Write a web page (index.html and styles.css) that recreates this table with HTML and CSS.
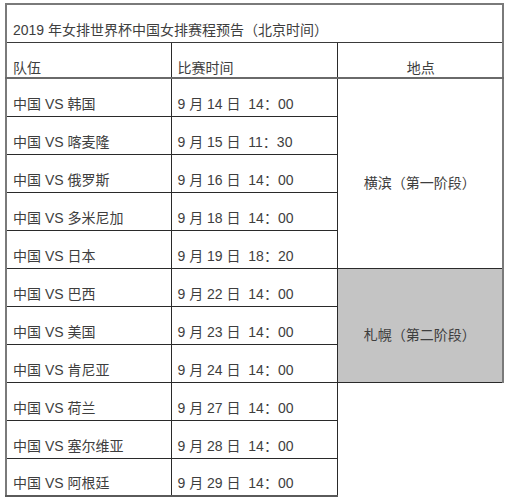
FILE: index.html
```html
<!DOCTYPE html>
<html lang="zh">
<head>
<meta charset="utf-8">
<link rel="stylesheet" href="styles.css">
</head>
<body>
<div class="page">
<table class="sched">
  <colgroup><col class="c1"><col class="c2"><col class="c3"></colgroup>
  <tr class="title"><td colspan="3">2019 年女排世界杯中国女排赛程预告（北京时间）</td></tr>
  <tr class="head"><td>队伍</td><td>比赛时间</td><td class="center">地点</td></tr>
  <tr><td>中国 VS 韩国</td><td>9 月 14 日&nbsp; 14：00</td><td rowspan="5" class="venue">横滨（第一阶段）</td></tr>
  <tr><td>中国 VS 喀麦隆</td><td>9 月 15 日&nbsp; 11：30</td></tr>
  <tr><td>中国 VS 俄罗斯</td><td>9 月 16 日&nbsp; 14：00</td></tr>
  <tr><td>中国 VS 多米尼加</td><td>9 月 18 日&nbsp; 14：00</td></tr>
  <tr><td>中国 VS 日本</td><td>9 月 19 日&nbsp; 18：20</td></tr>
  <tr><td>中国 VS 巴西</td><td>9 月 22 日&nbsp; 14：00</td><td rowspan="3" class="venue gray">札幌（第二阶段）</td></tr>
  <tr><td>中国 VS 美国</td><td>9 月 23 日&nbsp; 14：00</td></tr>
  <tr><td>中国 VS 肯尼亚</td><td>9 月 24 日&nbsp; 14：00</td></tr>
  <tr><td>中国 VS 荷兰</td><td>9 月 27 日&nbsp; 14：00</td><td rowspan="3" class="open"></td></tr>
  <tr><td>中国 VS 塞尔维亚</td><td>9 月 28 日&nbsp; 14：00</td></tr>
  <tr class="last"><td>中国 VS 阿根廷</td><td>9 月 29 日&nbsp; 14：00</td></tr>
</table>
</div>
</body>
</html>
```
FILE: styles.css
```css
html, body {
  margin: 0;
  padding: 0;
  background: #ffffff;
}
.page {
  padding: 3px 0 0 5px;
}
.sched {
  border-collapse: collapse;
  table-layout: fixed;
  width: 497px;
  font-family: "Liberation Sans", "Noto Sans CJK SC", sans-serif;
  font-size: 14px;
  color: #3e3e3e;
}
.c1 { width: 165px; }
.c2 { width: 166px; }
.c3 { width: 166px; }
.sched td {
  border: 1px solid #2a2a2a;
  height: 38px;
  padding: 0 4px 3px 6px;
  vertical-align: bottom;
  line-height: 18px;
  white-space: nowrap;
  box-sizing: border-box;
}
.sched tr.title td {
  height: 38px;
  border-top: 2px solid #7a7a7a;
  border-left: 2px solid #7a7a7a;
  border-right: 2px solid #7a7a7a;
  border-bottom: 1px solid #3a3a3a;
  padding-left: 6px;
  padding-bottom: 3px;
}
.sched tr td:first-child {
  border-left: 2px solid #7a7a7a;
}
.sched tr.head td {
  height: 36px;
  border-bottom: 2px solid #6a6a6a;
  padding-bottom: 0;
}
.sched tr.head td.center {
  border-right: 2px solid #7a7a7a;
  text-align: center;
}
.sched td.venue {
  border-right: 2px solid #7a7a7a;
  text-align: center;
  vertical-align: middle;
  padding: 20px 0 0 0;
}
.sched td.gray {
  background: #c4c4c4;
}
.sched td.open {
  border-right: none;
  border-bottom: none;
}
.sched tr.last td {
  border-bottom: 2px solid #5a5a5a;
}
```
